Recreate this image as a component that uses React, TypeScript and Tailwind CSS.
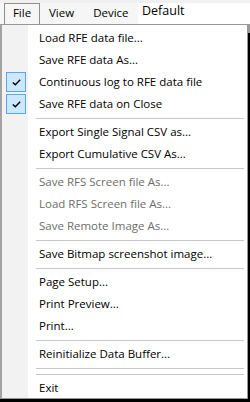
import React from "react";

type Item =
  | { kind: "item"; label: string; disabled?: boolean; checked?: boolean }
  | { kind: "sep" };

const items: Item[] = [
  { kind: "item", label: "Load RFE data file..." },
  { kind: "item", label: "Save RFE data As..." },
  { kind: "item", label: "Continuous log to RFE data file", checked: true },
  { kind: "item", label: "Save RFE data on Close", checked: true },
  { kind: "sep" },
  { kind: "item", label: "Export Single Signal CSV as..." },
  { kind: "item", label: "Export Cumulative CSV As..." },
  { kind: "sep" },
  { kind: "item", label: "Save RFS Screen file As...", disabled: true },
  { kind: "item", label: "Load RFS Screen file As...", disabled: true },
  { kind: "item", label: "Save Remote Image As...", disabled: true },
  { kind: "sep" },
  { kind: "item", label: "Save Bitmap screenshot image..." },
  { kind: "sep" },
  { kind: "item", label: "Page Setup..." },
  { kind: "item", label: "Print Preview..." },
  { kind: "item", label: "Print..." },
  { kind: "sep" },
  { kind: "item", label: "Reinitialize Data Buffer..." },
  { kind: "sep" },
  { kind: "sep" },
  { kind: "item", label: "Exit" },
];

function Check() {
  return (
    <div className="absolute left-[4px] top-[1px] w-[20px] h-[20px] border border-[#5aa6ec] bg-[#cce8ff] flex items-center justify-center">
      <svg width="9" height="7" viewBox="0 0 9 7">
        <path d="M0.8 3.4 L3.3 5.8 L8.2 0.8" fill="none" stroke="#000" strokeWidth="1.4" />
      </svg>
    </div>
  );
}

export default function App() {
  return (
    <div
      className="w-[250px] h-[402px] bg-black overflow-hidden text-[11.5px] leading-none"
      style={{ fontFamily: '"Open Sans", "Noto Sans", sans-serif' }}
    >
      {/* menu bar */}
      <div className="h-[24px] flex bg-[#f0f0f0] pt-[3px]">
        <div className="w-[138px] bg-[#f6f6f6] flex items-stretch">
          <div className="ml-[4px] w-[36px] border border-b-0 border-[#8f8f8f] bg-[#f6f6f6] flex items-center justify-center text-black pb-[2px]">
            File
          </div>
          <div className="ml-[9px] flex items-center text-black pb-[2px]">View</div>
          <div className="ml-[19px] flex items-center text-black pb-[2px]">Device</div>
        </div>
        <div className="flex-1 bg-white flex items-center pl-[4px] text-black pb-[4px] text-[12.5px]">
          Default
        </div>
      </div>
      <div className="flex">
        <div className="w-[248px] h-[375px] border border-l-2 border-[#979797] border-l-[#a3a3a3] pt-[2px] bg-[linear-gradient(to_right,#f2f2f2_0px,#f2f2f2_26px,#ffffff_26px)]">
          {items.map((it, i) =>
            it.kind === "sep" ? (
              <div key={i} className="h-[6px] flex items-center pl-[34px] pr-[3px]">
                <div className="h-px w-full bg-[#c8c8c8]" />
              </div>
            ) : (
              <div
                key={i}
                className={`relative h-[22px] flex items-center pl-[37px] pb-[1px] whitespace-nowrap ${
                  it.disabled ? "text-[#6d6d6d]" : "text-black"
                }`}
              >
                {it.checked && <Check />}
                {it.label}
              </div>
            )
          )}
        </div>
        <div className="w-[2px] h-[375px] flex flex-col">
          <div className="h-[9px] bg-[#9a9a9a]" />
          <div className="flex-1 bg-black" />
        </div>
      </div>
    </div>
  );
}
